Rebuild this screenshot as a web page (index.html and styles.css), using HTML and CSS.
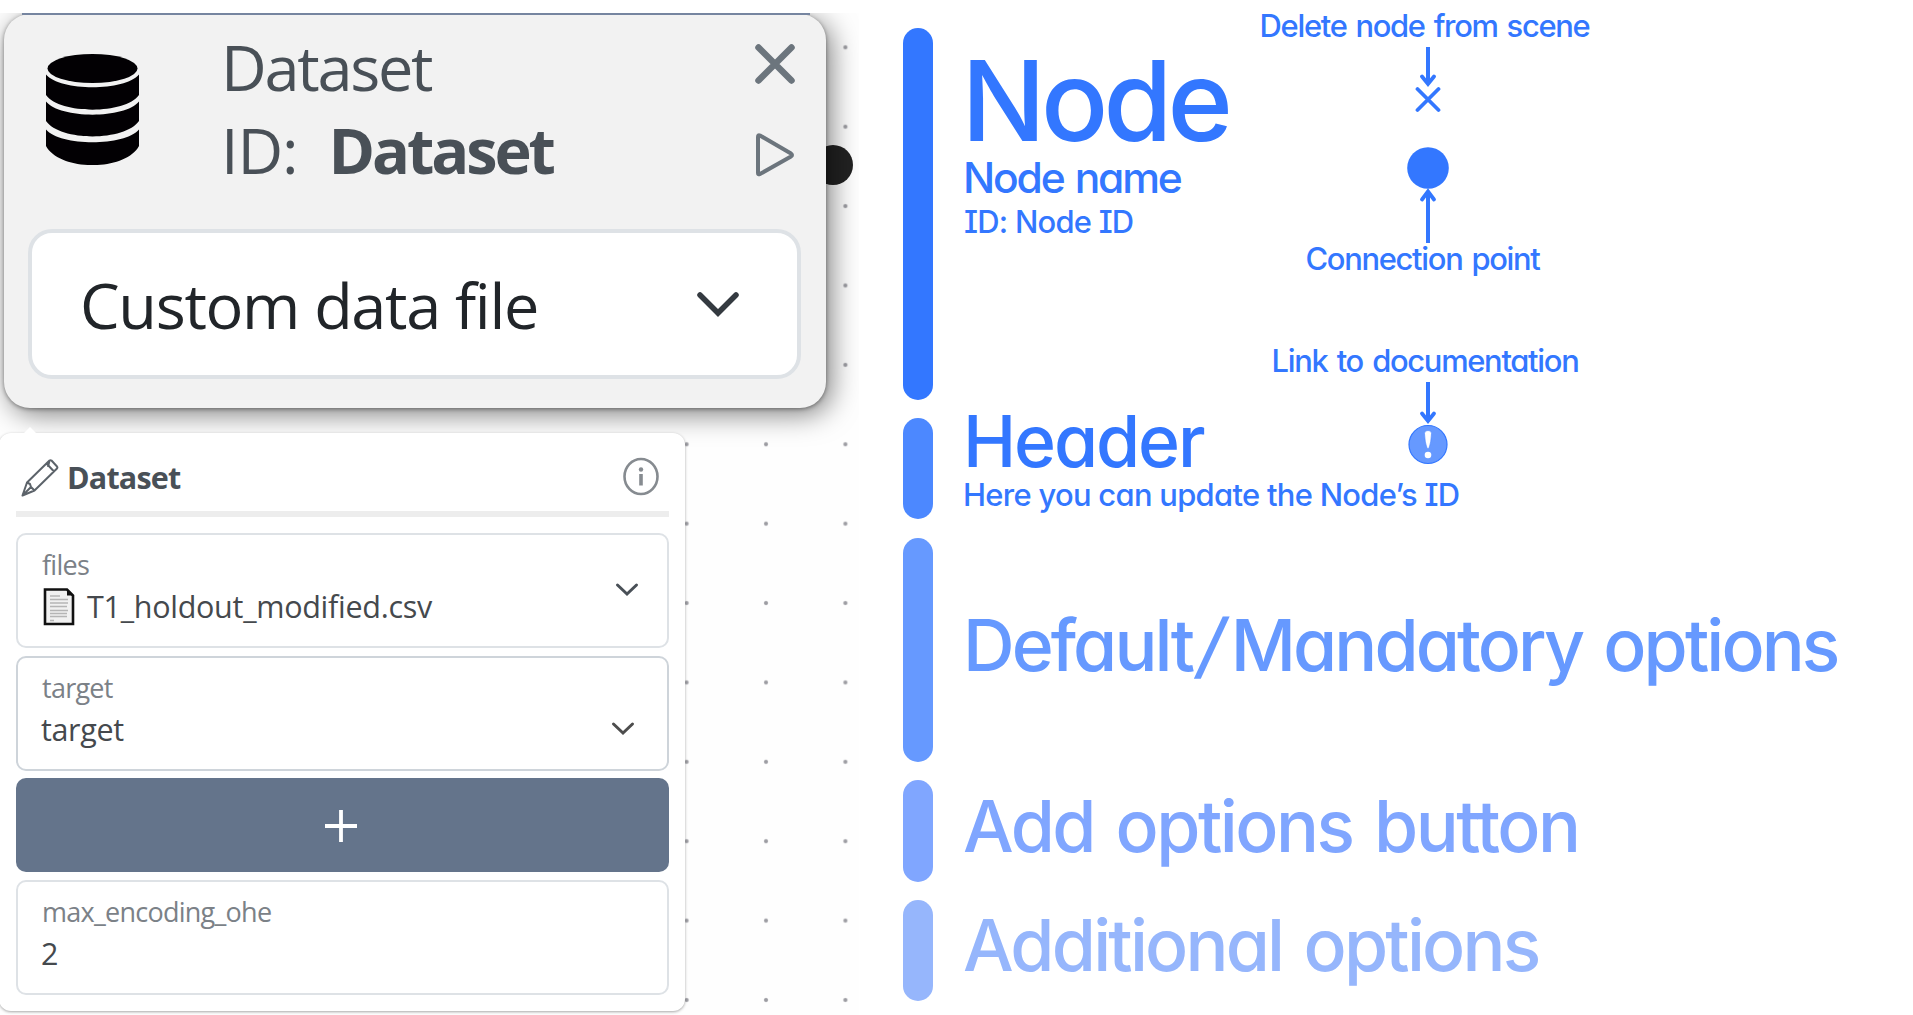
FILE: index.html
```html
<!DOCTYPE html>
<html lang="en">
<head>
<meta charset="utf-8">
<title>Dataset node</title>
<link rel="stylesheet" href="styles.css">
</head>
<body>
<main class="page">
  <section class="editor">
    <div class="edge"></div>
    <article class="node">
      <span class="handle"></span>
      <div class="node-body">
        <header class="node-head">
          <svg class="db" viewBox="0 0 93 111">
            <ellipse cx="46.500" cy="14.500" rx="45" ry="14.500"/>
            <path d="M0 20.500C14 37.500 79 37.500 93 20.500V41C79 60.500 14 60.500 0 41Z"/>
            <path d="M0 47.500C14 65 79 65 93 47.500V67C79 87.500 14 87.500 0 67Z"/>
            <path d="M0 75.500C14 92.500 79 92.500 93 75.500V92C79 117.500 14 117.500 0 92Z"/>
          </svg>
          <div class="node-titles">
            <div class="node-name">Dataset</div>
            <div class="node-id"><span class="id-label">ID:</span><strong>Dataset</strong></div>
          </div>
          <div class="node-actions">
            <svg width="40" height="40" viewBox="0 0 40 40"><path d="M3.500 3.500 36.500 36.500M36.500 3.500 3.500 36.500" fill="none" stroke="#6c757d" stroke-width="6.500" stroke-linecap="round"/></svg>
            <svg width="40" height="44" viewBox="0 0 40 44"><path d="M3 4V40Q3 42 5 41L36 23.500Q38 22 36 20.500L5 2.500Q3 1.500 3 4Z" fill="none" stroke="#6c757d" stroke-width="4" stroke-linejoin="round"/></svg>
          </div>
        </header>
        <div class="node-select">
          <span>Custom data file</span>
          <svg width="42" height="25" viewBox="0 0 42 25"><path d="M3 3 21 21 39 3" fill="none" stroke="#343a40" stroke-width="5.500" stroke-linecap="round"/></svg>
        </div>
      </div>
    </article>

    <article class="panel">
      <header class="panel-head">
        <svg width="38" height="38" viewBox="0 0 38 38" fill="none" stroke="#5c636a" stroke-width="2" stroke-linejoin="round"><path d="M1.500 36.500 6 23.500 28.500 1.500Q29.500 .8 30.500 1.500L36 7.500Q36.800 8.500 36 9.500L13.500 31.500ZM6 23.500 9 25 10 28 13.500 31.500M25.500 4.500 33 12.500M28.500 1.500 27 8M1.500 36.500 10 28"/></svg>
        <strong>Dataset</strong>
        <svg class="info" width="38" height="39" viewBox="0 0 38 39"><ellipse cx="19" cy="19.500" rx="16.500" ry="17.500" fill="none" stroke="#868b90" stroke-width="2.600"/><circle cx="19" cy="12.500" r="2.200" fill="#868b90"/><path d="M19 17V28.500" stroke="#868b90" stroke-width="3.600"/></svg>
      </header>
      <div class="field">
        <div class="field-text">
          <div class="label">files</div>
          <div class="value file"><svg width="32" height="38" viewBox="0 0 32 38"><path d="M2 1.500H24L30 7.500V36H2Z" fill="#f1f1f1" stroke="#111" stroke-width="2.600"/><path d="M24 1.500V7.500H30Z" fill="#111"/><path d="M7 8H17M7 11.500H25M7 15H25M7 18.500H24M7 22.500H25M7 25.500H24M7 28.500H24M7 32.500H11" stroke="#b5b5b5" stroke-width="1.500"/></svg><span>T1_holdout_modified.csv</span></div>
        </div>
        <svg class="chev" width="24" height="15" viewBox="0 0 24 15"><path d="M2.500 3 12 12 21.500 3" fill="none" stroke="#495057" stroke-width="3" stroke-linecap="round"/></svg>
      </div>
      <div class="field strong">
        <div class="field-text">
          <div class="label">target</div>
          <div class="value num">target</div>
        </div>
        <svg class="chev low" width="24" height="15" viewBox="0 0 24 15"><path d="M2.500 3 12 12 21.500 3" fill="none" stroke="#4d4d4d" stroke-width="3" stroke-linecap="round"/></svg>
      </div>
      <button class="add" type="button" aria-label="Add option"><svg width="32" height="32" viewBox="0 0 32 32"><path d="M16 0V32M0 16H32" stroke="#fff" stroke-width="3.800"/></svg></button>
      <div class="field">
        <div class="field-text">
          <div class="label">max_encoding_ohe</div>
          <div class="value num">2</div>
        </div>
      </div>
    </article>
  </section>

  <section class="legend">
    <div class="top">
      <div class="groups">
        <div class="group g-node"><i class="bar"></i><div class="text"><h1>Node</h1><h3>Node name</h3><p class="nid">ID: Node ID</p></div></div>
        <div class="group g-header"><i class="bar"></i><div class="text"><h2 class="hd">Header</h2><p class="here">Here you can update the Node’s ID</p></div></div>
      </div>
      <div class="callouts">
        <p class="c-delete">Delete node from scene</p>
        <svg width="26" height="66" viewBox="0 0 26 66" fill="none" stroke="#3377ff" stroke-width="4"><path d="M13 0V37"/><path d="M7 29.500 13 37 19 29.500M2.500 42 23.500 63M23.500 42 2.500 63" stroke-width="3.800" stroke-linecap="round"/></svg>
        <svg class="point" width="42" height="97" viewBox="0 0 42 97"><circle cx="21" cy="21" r="20.800" fill="#3377ff"/><path d="M21 96V44" stroke="#3377ff" stroke-width="4"/><path d="M15 52.500 21 44.500 27 52.500" fill="none" stroke="#3377ff" stroke-width="3.800" stroke-linecap="round"/></svg>
        <p class="c-point">Connection point</p>
        <p class="c-link">Link to documentation</p>
        <svg class="doc" width="42" height="84" viewBox="0 0 42 84"><path d="M21 0V39" stroke="#3377ff" stroke-width="4"/><path d="M15 31.500 21 39 27 31.500" fill="none" stroke="#3377ff" stroke-width="3.800" stroke-linecap="round"/><circle cx="21" cy="62.500" r="19" fill="#6699ff" stroke="#3377ff" stroke-width="1.200"/><path d="M17.500 51.500Q17.500 48.500 21 48.500T24.500 51.500Q24 61 22 66Q21 67.500 20 66Q18 61 17.500 51.500Z" fill="#fff" stroke="#3377ff" stroke-width=".5"/><circle cx="21" cy="73" r="3.300" fill="#fff"/></svg>
      </div>
    </div>
    <div class="group g-default"><i class="bar"></i><h2 class="df">Default<span class="slash">/</span>Mandatory options</h2></div>
    <div class="group g-add"><i class="bar"></i><h2 class="ad">Add options button</h2></div>
    <div class="group g-more"><i class="bar"></i><h2 class="mo">Additional options</h2></div>
  </section>
</main>
</body>
</html>
```
FILE: styles.css
```css
* { box-sizing: border-box; margin: 0; }
body { background: #fff; font-family: "Open Sans", "Noto Sans", sans-serif; white-space: nowrap; }
svg { display: block; flex: none; }
.page { display: flex; width: 1913px; height: 1015px; overflow: hidden; }

.editor {
  width: 859px; height: 1002px; margin-top: 13px; flex: none; overflow: hidden;
  background: radial-gradient(circle at center, #9c9ca2 1.4px, transparent 2.6px) 11.8px -5.4px / 79.4px 79.4px, #fefefe;
}
.edge { position: relative; z-index: 1; height: 1.5px; margin: 0 49px -.5px 22px; background: #7685a0; }

.node { position: relative; width: 822px; height: 394px; margin-left: 3.5px; }
.handle { position: absolute; left: 809.5px; top: 131px; width: 40px; height: 40px; border-radius: 50%; background: #222; }
.node-body {
  position: relative; height: 394px; padding: 10px 24.500px 0; border-radius: 26px; background: #f2f2f2;
  box-shadow: 0 1px 4px rgba(0,0,0,.4), 5px 6px 28px rgba(0,0,0,.5);
}
.node-head { display: flex; height: 166px; color: #495057; }
.db { width: 93px; height: 111px; margin: 30px 0 0 18px; fill: #020003; }
.node-titles { margin: 1px 0 0 82px; font-size: 63px; line-height: 83px; }
.node-name { letter-spacing: -2.26px; }
.node-id { display: flex; }
.id-label { width: 107.5px; letter-spacing: -1.15px; }
.node-id strong { letter-spacing: -3.1px; }
.node-actions { display: flex; flex-direction: column; gap: 49px; margin: 20px 6px 0 auto; }
.node-select {
  display: flex; align-items: center; justify-content: space-between; height: 150px; margin-top: 39px;
  padding: 0 58px 0 48px; border: 4px solid #dee2e6; border-radius: 24px; background: #fff;
  color: #212529; font-size: 63px; letter-spacing: -1.32px;
}

.panel {
  position: relative; width: 686px; height: 578px; margin: 25px 0 0 -1px; padding: 0 16px 0 17px;
  border-radius: 12px; background: #fff; box-shadow: 0 1px 3px rgba(0,0,0,.35);
}
.panel::before {
  content: ""; position: absolute; left: 25px; top: -6px;
  border: 6px solid transparent; border-top: 0; border-bottom-color: #fff;
}
.panel-head { display: flex; height: 84px; padding: 26px 9px 0 5px; border-bottom: 6px solid #ededed; }
.panel-head strong { color: #495057; margin-left: 8px; font-size: 30.5px; line-height: 36px; letter-spacing: -.81px; }
.info { margin: -2px 0 0 auto; }
.field { display: flex; justify-content: space-between; height: 115px; margin-top: 16px; padding: 13px 28px 0 24px; border: 2px solid #dee2e6; border-radius: 10px; }
.field.strong { margin-top: 8px; border-color: #ced4da; }
.label { color: #7b8187; font-size: 27px; line-height: 34px; letter-spacing: -.74px; }
.value { color: #45494d; font-size: 30.5px; line-height: 49px; letter-spacing: -.35px; }
.num { margin-left: -1px; }
.file { display: flex; }
.file svg { margin: 6px 12px 0 1px; }
.file span { letter-spacing: -.28px; }
.chev { margin-top: 34px; }
.chev.low { margin: 50px 4px 0 0; }
.add { display: flex; align-items: center; justify-content: center; width: 100%; height: 94px; margin-top: 7px; padding: 2px 3px 0 0; border: 0; border-radius: 10px; background: #64748b; }
.add + .field { margin-top: 8px; }

.legend {
  flex: 1; margin-left: 44px; color: #3377ff; font-family: Inter, Lato, sans-serif;
  font-weight: 500; font-feature-settings: "cv11", "cv08";
}
.legend h1, .legend h2, .legend h3 { font-weight: 500; }
.top { display: flex; height: 519px; }
.groups { width: 344px; padding-top: 28px; }
.group { display: flex; gap: 30px; }
.bar { width: 30px; flex: none; border-radius: 15px; background: #3377ff; }
.g-node { height: 372px; }
.g-node .text { padding-top: 17.5px; }
h1 { margin-left: -1.5px; font-size: 111.4px; line-height: 110px; letter-spacing: -4.8px; }
h3 { font-size: 42.6px; line-height: 43px; letter-spacing: -2.2px; word-spacing: 2px; }
h2 { font-size: 71.5px; line-height: 46px; }
p { font-size: 30.9px; }
.nid { margin-left: 1px; line-height: 45px; letter-spacing: -.75px; }
.g-header { height: 101px; margin-top: 18px; }
.g-header .bar { background: #4c88ff; }
.hd { letter-spacing: -2.13px; }
.here { line-height: 61px; letter-spacing: -.69px; }
.g-default { height: 224px; margin-top: 19px; color: #6699ff; }
.g-add { height: 101.5px; margin-top: 18px; color: #80a6ff; }
.g-more { height: 101px; margin-top: 18.5px; color: #96b6fc; }
.g-default .bar, .g-add .bar, .g-more .bar { background: currentColor; }
.df { line-height: 214px; letter-spacing: -2.9px; word-spacing: 5px; }
.slash { display: inline-block; margin: 0 8px 0 7px; transform: skewX(-11deg); }
.ad { line-height: 92px; letter-spacing: -2.5px; word-spacing: 5px; }
.mo { line-height: 90px; letter-spacing: -2.8px; word-spacing: 5px; }

.callouts { display: flex; flex-direction: column; align-items: center; width: 361px; padding-top: 5.5px; }
.callouts p { line-height: 40px; }
.c-delete { margin-right: 6px; letter-spacing: -1.3px; word-spacing: 2px; }
.callouts svg { margin-top: 1.5px; }
.callouts .point { margin: 34px 0 0 1px; }
.c-point { margin: -5px 10px 0 0; letter-spacing: -1.3px; word-spacing: 2px; }
.c-link { margin: 62px 5px 0 0; letter-spacing: -1.3px; word-spacing: 2.3px; }
.callouts .doc { margin: 1px 0 0 1px; }
```
